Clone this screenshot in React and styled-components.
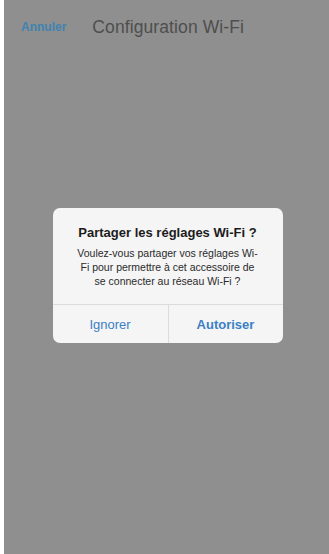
import React from 'react';
import styled, { createGlobalStyle } from 'styled-components';

const GlobalStyle = createGlobalStyle`
  html, body {
    margin: 0;
    padding: 0;
    background: #ffffff;
  }
  body {
    font-family: "Liberation Sans", Arial, sans-serif;
  }
`;

const Page = styled.div`
  width: 329px;
  height: 554px;
  padding-left: 4px;
  box-sizing: border-box;
  background: #ffffff;
`;

const Screen = styled.div`
  position: relative;
  height: 100%;
  background: #8f8f8f;
  display: flex;
  flex-direction: column;
`;

const NavBar = styled.div`
  height: 52px;
  display: flex;
  align-items: center;
  padding: 2px 0 0 17px;
  box-sizing: border-box;
`;

const NavLink = styled.span`
  font-size: 12px;
  font-weight: bold;
  color: #3f83b0;
  margin-right: 26px;
`;

const NavTitle = styled.span`
  font-size: 17.5px;
  color: #4e4e4e;
  letter-spacing: 0.1px;
`;

const Overlay = styled.div`
  position: absolute;
  inset: 0;
  display: flex;
  align-items: center;
  justify-content: center;
  padding-left: 2px;
  padding-bottom: 3px;
`;

const Dialog = styled.div`
  width: 230px;
  background: #f5f5f5;
  border-radius: 7px;
  overflow: hidden;
  text-align: center;
`;

const Content = styled.div`
  padding: 17px 12px 16px;
`;

const Title = styled.div`
  font-size: 13px;
  font-weight: bold;
  color: #1c1c1c;
  line-height: 16px;
  margin-bottom: 5px;
`;

const Message = styled.div`
  font-size: 10.5px;
  line-height: 14px;
  color: #2a2a2a;
`;

const Actions = styled.div`
  display: grid;
  grid-template-columns: 1fr 1fr;
  border-top: 1px solid #dcdcdc;
  height: 38px;
`;

const Action = styled.div`
  display: flex;
  align-items: center;
  justify-content: center;
  font-size: 13px;
  color: #3b7fc6;
  font-weight: ${({ $primary }) => ($primary ? 'bold' : 'normal')};
  border-left: ${({ $divider }) => ($divider ? '1px solid #dcdcdc' : 'none')};
`;

export default function App() {
  return (
    <>
      <GlobalStyle />
      <Page>
        <Screen>
          <NavBar>
            <NavLink>Annuler</NavLink>
            <NavTitle>Configuration Wi-Fi</NavTitle>
          </NavBar>
          <Overlay>
            <Dialog>
              <Content>
                <Title>Partager les réglages Wi-Fi ?</Title>
                <Message>
                  Voulez-vous partager vos réglages Wi-
                  <br />
                  Fi pour permettre à cet accessoire de
                  <br />
                  se connecter au réseau Wi-Fi ?
                </Message>
              </Content>
              <Actions>
                <Action>Ignorer</Action>
                <Action $primary $divider>Autoriser</Action>
              </Actions>
            </Dialog>
          </Overlay>
        </Screen>
      </Page>
    </>
  );
}
